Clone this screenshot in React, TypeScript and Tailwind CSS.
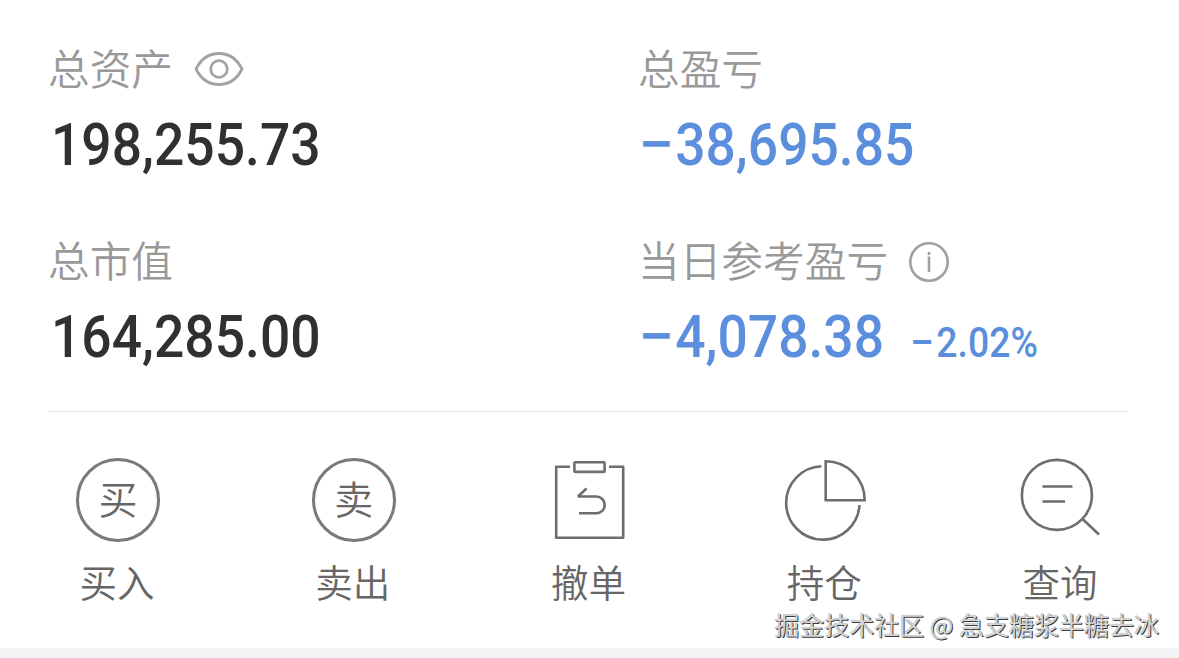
import { ReactNode } from "react";

interface StatProps {
  label: string;
  icon?: ReactNode;
  value: string;
  extra?: string;
  loss?: boolean;
}

interface ActionProps {
  label: string;
  children: ReactNode;
}

function EyeIcon() {
  return (
    <svg
      className="ml-[21px] h-9 w-[50px]"
      viewBox="0 0 50 36"
      fill="none"
      stroke="#a3a3a3"
      strokeWidth="2.8"
    >
      <path d="M2 17C7 7 15 1.500 25 1.500S43 7 48 17C43 27 35 32.500 25 32.500S7 27 2 17Z" />
      <circle cx="25" cy="17" r="8.300" />
    </svg>
  );
}

function InfoIcon() {
  return (
    <svg
      className="ml-[20px] h-[42px] w-[42px]"
      viewBox="0 0 42 42"
      fill="none"
      stroke="#a0a0a0"
      strokeWidth="2.600"
    >
      <circle cx="21" cy="21" r="18.700" />
      <path d="M21 15.500V31M21 11V14" strokeWidth="2.600" />
    </svg>
  );
}

function Stat({ label, icon, value, extra, loss }: StatProps) {
  return (
    <div className="flex h-48 flex-col">
      <div className="flex h-[60px] items-center text-[41.7px] font-[350] text-[#999]">
        <span className="pb-[6px]">{label}</span>
        {icon}
      </div>
      <div
        className={`flex h-[84px] items-baseline pt-[3px] font-[Roboto] font-medium leading-[84px] whitespace-nowrap ${
          loss ? "text-[#5b8edc]" : "pl-[3px] text-[#303030]"
        }`}
      >
        <span className="origin-left scale-x-[0.89] text-[60px]">
          {loss && (
            <span className="mr-[8px] inline-block origin-left scale-x-[1.2]">
              −
            </span>
          )}
          {value}
        </span>
        {extra && (
          <span className="ml-[-4px] origin-left scale-x-[0.89] text-[42px]">
            <span className="mr-[6px] inline-block origin-left scale-x-[1.15]">
              −
            </span>
            {extra}
          </span>
        )}
      </div>
    </div>
  );
}

function Action({ label, children }: ActionProps) {
  return (
    <button className="flex flex-col items-center text-[#666]">
      {children}
      <span className="mt-[11px] pr-[2px] text-[37.5px] leading-[56px] font-[350]">
        {label}
      </span>
    </button>
  );
}

function LineIcon({ children }: { children: ReactNode }) {
  return (
    <svg
      className="h-[84px] w-[84px]"
      viewBox="0 0 84 84"
      fill="none"
      stroke="#6e6e6e"
      strokeWidth="2.600"
    >
      {children}
    </svg>
  );
}

function CircleText({ text }: { text: string }) {
  return (
    <div className="flex h-[84px] w-[84px] items-center justify-center rounded-full border-[3px] border-[#7a7a7a] pb-[5px] text-[39px] leading-none font-[350]">
      {text}
    </div>
  );
}

export default function App() {
  return (
    <div className="flex h-[658px] w-[1179px] flex-col overflow-hidden bg-white font-['Noto_Sans_CJK_SC',sans-serif]">
      <div className="mx-12 mr-[51px] grid h-[412px] grid-cols-[590px_1fr] content-start border-b border-[#e8e8e8] pt-10">
        <Stat label="总资产" icon={<EyeIcon />} value="198,255.73" />
        <Stat label="总盈亏" value="38,695.85" loss />
        <Stat label="总市值" value="164,285.00" />
        <Stat
          label="当日参考盈亏"
          icon={<InfoIcon />}
          value="4,078.38"
          extra="2.02%"
          loss
        />
      </div>

      <div className="grid h-[236px] grid-cols-5 content-start pt-[46px]">
        <Action label="买入">
          <CircleText text="买" />
        </Action>
        <Action label="卖出">
          <CircleText text="卖" />
        </Action>
        <Action label="撤单">
          <LineIcon>
            <path
              d="M23 8.700H9.200V79.700H76.200V8.700H62"
              strokeLinejoin="round"
            />
            <rect x="27.400" y="4.300" width="30.200" height="9.600" rx="1" />
            <path
              d="M39.500 30.500L31 38.500H49.300a8.400 8.400 0 0 1 0 16.800H32"
              strokeLinejoin="bevel"
            />
          </LineIcon>
        </Action>
        <Action label="持仓">
          <LineIcon>
            <path d="M42.700 3.300V42.200H81.700A39 39 0 0 0 42.700 3.300Z" />
            <path d="M38.400 8.300A36.700 36.700 0 1 0 76.500 47" />
          </LineIcon>
        </Action>
        <Action label="查询">
          <LineIcon>
            <circle cx="37.900" cy="36.900" r="35" />
            <path d="M63 60.500L80 76.500M23.500 28.500H53.500M23.500 43.500H46" />
          </LineIcon>
        </Action>
      </div>

      <div className="relative h-[10px] bg-[#f4f4f4]">
        <span className="absolute right-[20px] bottom-[15px] text-[25px] leading-[38px] whitespace-nowrap text-[#d4d4d4] [text-shadow:1px_1px_0_#3c3c3c,0_0_1px_#999]">
          掘金技术社区 @ 急支糖浆半糖去冰
        </span>
      </div>
    </div>
  );
}
